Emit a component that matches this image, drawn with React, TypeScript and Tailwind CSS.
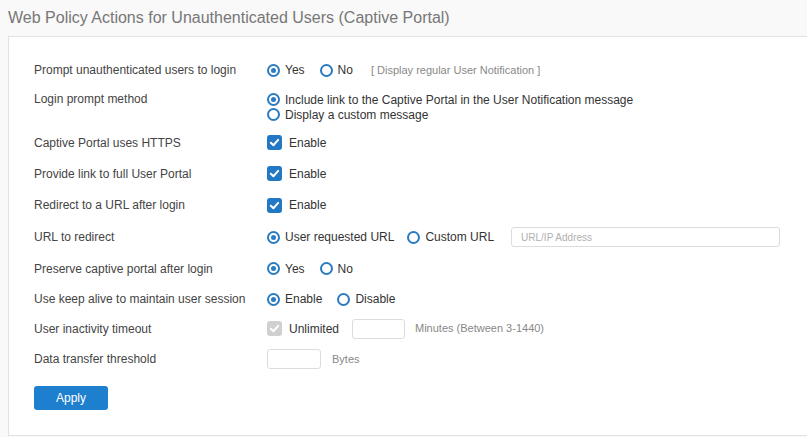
import React from 'react'

const font = { fontFamily: '"Liberation Sans", Arial, sans-serif' }

function Radio({ checked, label, className = '' }: { checked?: boolean; label: string; className?: string }) {
  return (
    <span className={`flex items-center ${className}`}>
      <span className="w-[13px] h-[13px] rounded-full border-2 border-[#2a7bc0] flex items-center justify-center shrink-0">
        {checked && <span className="w-[5px] h-[5px] rounded-full bg-[#2a7bc0]" />}
      </span>
      <span className="ml-[5px] text-[12px] text-[#333]">{label}</span>
    </span>
  )
}

function Check({ label, disabled }: { label: string; disabled?: boolean }) {
  return (
    <span className="flex items-center">
      <span
        className={`w-[15px] h-[15px] rounded-[3px] flex items-center justify-center ${
          disabled ? 'bg-[#d0d0d0]' : 'bg-[#2278c3]'
        }`}
      >
        <svg width="11" height="11" viewBox="0 0 12 12">
          <path d="M2 6.3 L4.8 9 L10 3.2" fill="none" stroke="white" strokeWidth="2.2" strokeLinecap="round" strokeLinejoin="round" />
        </svg>
      </span>
      <span className="ml-[7px] text-[12px] text-[#333]">{label}</span>
    </span>
  )
}

function Row({ label, h, children }: { label: string; h: string; children: React.ReactNode }) {
  return (
    <div className={`flex items-center ${h}`}>
      <div className="w-[233px] text-[12px] text-[#444]">{label}</div>
      <div className="flex items-center">{children}</div>
    </div>
  )
}

export default function App() {
  return (
    <div className="w-[807px] h-[437px] bg-[#f9f9f9] overflow-hidden" style={font}>
      <div className="h-[36px] flex items-center pl-[8px] text-[16px] text-[#777]">
        Web Policy Actions for Unauthenticated Users (Captive Portal)
      </div>
      <div className="ml-[8px] w-[820px] h-[400px] bg-white border border-[#e2e2e2] pl-[25px] pt-[18px]">
        <Row label="Prompt unauthenticated users to login" h="h-[30px]">
          <Radio checked label="Yes" />
          <Radio label="No" className="ml-[15px]" />
          <span className="ml-[18px] text-[11px] text-[#888]">[ Display regular User Notification ]</span>
        </Row>
        <div className="flex items-start h-[42px] pt-[7px]">
          <div className="w-[233px] text-[12px] text-[#444] leading-[15px]">Login prompt method</div>
          <div className="flex flex-col">
            <span className="h-[15px] flex items-center"><Radio checked label="Include link to the Captive Portal in the User Notification message" /></span>
            <span className="h-[15px] flex items-center"><Radio label="Display a custom message" /></span>
          </div>
        </div>
        <Row label="Captive Portal uses HTTPS" h="h-[31px]">
          <Check label="Enable" />
        </Row>
        <Row label="Provide link to full User Portal" h="h-[31px]">
          <Check label="Enable" />
        </Row>
        <Row label="Redirect to a URL after login" h="h-[32px]">
          <Check label="Enable" />
        </Row>
        <Row label="URL to redirect" h="h-[32px]">
          <Radio checked label="User requested URL" />
          <Radio label="Custom URL" className="ml-[13px]" />
          <div className="ml-[17px] w-[269px] h-[20px] border border-[#dcdcdc] rounded-[3px] flex items-center pl-[9px] text-[10px] text-[#b0b0b0]">
            URL/IP Address
          </div>
        </Row>
        <Row label="Preserve captive portal after login" h="h-[31px]">
          <Radio checked label="Yes" />
          <Radio label="No" className="ml-[15px]" />
        </Row>
        <Row label="Use keep alive to maintain user session" h="h-[30px]">
          <Radio checked label="Enable" />
          <Radio label="Disable" className="ml-[15px]" />
        </Row>
        <Row label="User inactivity timeout" h="h-[29px]">
          <Check label="Unlimited" disabled />
          <div className="ml-[13px] w-[53px] h-[20px] border border-[#dcdcdc] rounded-[3px]" />
          <span className="ml-[10px] text-[11px] text-[#888]">Minutes (Between 3-1440)</span>
        </Row>
        <Row label="Data transfer threshold" h="h-[32px]">
          <div className="w-[54px] h-[20px] border border-[#dcdcdc] rounded-[3px]" />
          <span className="ml-[11px] text-[11px] text-[#888]">Bytes</span>
        </Row>
        <button className="mt-[11px] w-[74px] h-[24px] rounded-[3px] bg-[#1f7fcf] text-white text-[12px]">
          Apply
        </button>
      </div>
    </div>
  )
}
